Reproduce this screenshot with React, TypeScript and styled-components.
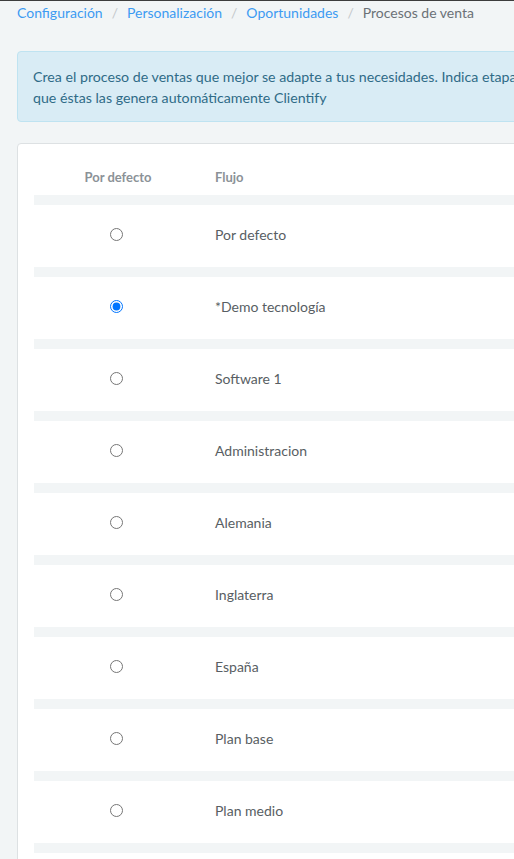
import React, { useState } from "react";
import styled, { createGlobalStyle } from "styled-components";

const GlobalStyle = createGlobalStyle`
  html, body {
    margin: 0;
    padding: 0;
    background: #f2f5f6;
    overflow: hidden;
  }
  body {
    font-family: "Lato", "Open Sans", sans-serif;
    font-size: 14px;
    color: #555b60;
    border-top: 1px solid #3d3d3d;
  }
`;

const Page = styled.div`
  width: 1100px;
  padding: 1px 17px 0 17px;
`;

const Breadcrumb = styled.nav`
  display: flex;
  align-items: center;
  line-height: 21px;
  font-size: 14px;
  margin-bottom: 28px;
`;

const Crumb = styled.a<{ $active?: boolean }>`
  color: ${({ $active }) => ($active ? "#6b7176" : "#3d9bf2")};
  text-decoration: none;
`;

const Sep = styled.span`
  color: #c4c8cb;
  padding: 0 9px;
`;

const Alert = styled.div`
  background: #d9ecf5;
  border: 1px solid #bfe3f1;
  border-radius: 4px;
  color: #2f6b87;
  line-height: 21px;
  font-size: 14.2px;
  padding: 14px 15px 13px;
  margin-bottom: 21px;
`;

const Card = styled.div`
  background: #fff;
  border: 1px solid #dde1e3;
  border-radius: 4px;
  padding: 0 16px;
`;

const Table = styled.table`
  width: 100%;
  border-collapse: collapse;
`;

const Th = styled.th<{ $center?: boolean }>`
  height: 41px;
  padding: 0 ${({ $center }) => ($center ? "15px" : "13px")} 10px;
  text-align: ${({ $center }) => ($center ? "center" : "left")};
  vertical-align: bottom;
  font-weight: 700;
  font-size: 13px;
  color: #8b9297;
`;

const Td = styled.td<{ $center?: boolean }>`
  height: 59px;
  padding: 0 ${({ $center }) => ($center ? "15px" : "13px")} 3px;
  border-top: 10px solid #f2f5f6;
  text-align: ${({ $center }) => ($center ? "center" : "left")};
  vertical-align: middle;
  color: #585e63;
`;

const FirstCol = styled.col`
  width: 168px;
`;

const Radio = styled.input`
  margin: 0;
  width: 13px;
  height: 13px;
  vertical-align: middle;
  position: relative;
  left: -2px;
  top: -2px;
`;

const flows = [
  "Por defecto",
  "*Demo tecnología",
  "Software 1",
  "Administracion",
  "Alemania",
  "Inglaterra",
  "España",
  "Plan base",
  "Plan medio",
  "Plan avanzado",
];

export default function App() {
  const [selected, setSelected] = useState(1);

  return (
    <>
      <GlobalStyle />
      <Page>
        <Breadcrumb>
          <Crumb href="#">Configuración</Crumb>
          <Sep>/</Sep>
          <Crumb href="#">Personalización</Crumb>
          <Sep>/</Sep>
          <Crumb href="#">Oportunidades</Crumb>
          <Sep>/</Sep>
          <Crumb $active>Procesos de venta</Crumb>
        </Breadcrumb>
        <Alert>
          Crea el proceso de ventas que mejor se adapte a tus necesidades. Indica etapas y probabilidades de cierre, no te preocupes por las actividades ya
          <br />
          que éstas las genera automáticamente Clientify
        </Alert>
        <Card>
          <Table>
            <colgroup>
              <FirstCol />
              <col />
            </colgroup>
            <thead>
              <tr>
                <Th $center>Por defecto</Th>
                <Th>Flujo</Th>
              </tr>
            </thead>
            <tbody>
              {flows.map((name, i) => (
                <tr key={name}>
                  <Td $center>
                    <Radio
                      type="radio"
                      name="default-flow"
                      checked={selected === i}
                      onChange={() => setSelected(i)}
                    />
                  </Td>
                  <Td>{name}</Td>
                </tr>
              ))}
            </tbody>
          </Table>
        </Card>
      </Page>
    </>
  );
}
